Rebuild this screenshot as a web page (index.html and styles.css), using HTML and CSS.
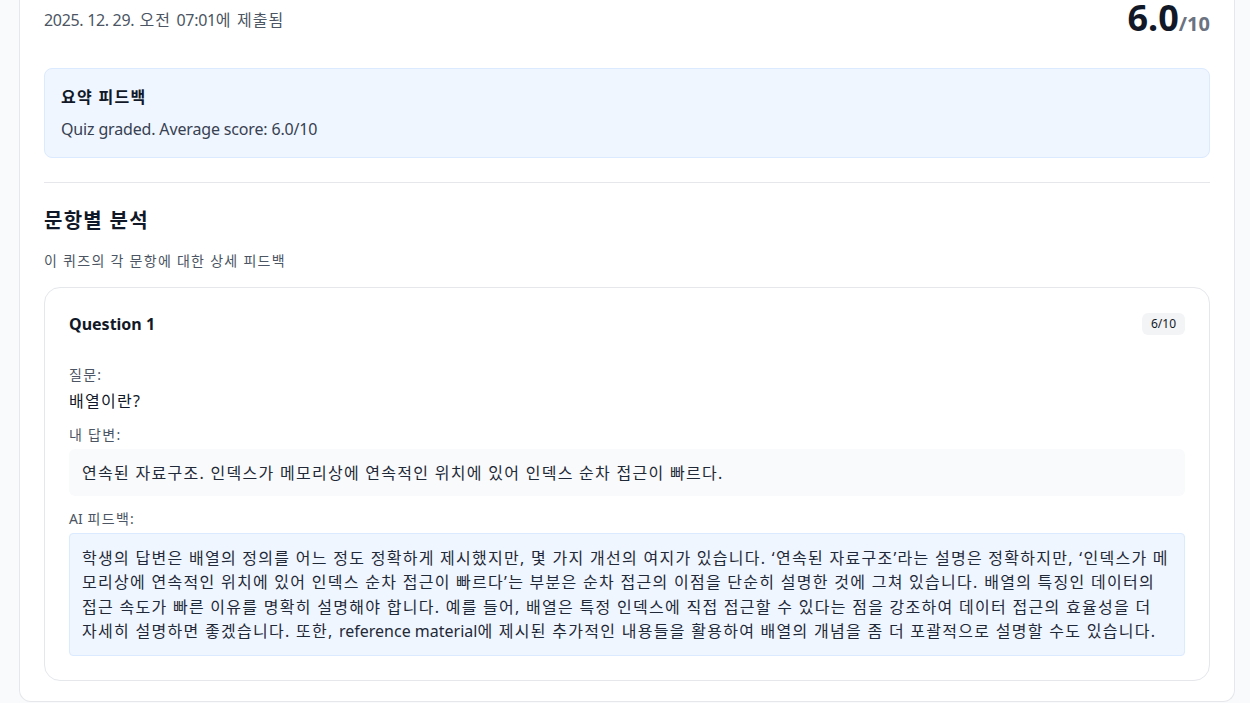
FILE: index.html
```html
<!DOCTYPE html>
<html lang="ko">
<head>
<meta charset="utf-8">
<title>퀴즈 결과</title>
<link rel="stylesheet" href="styles.css">
</head>
<body>
<main class="sheet">
  <header class="submit-row">
    <p class="submitted"><span class="latin">2025. 12. 29.</span> 오전 <span class="latin">07:01</span>에 제출됨</p>
    <div class="score"><span class="score-value">6.0</span><span class="score-max">/10</span></div>
  </header>

  <section class="summary">
    <h3 class="summary-title">요약 피드백</h3>
    <p class="summary-text latin">Quiz graded. Average score: 6.0/10</p>
  </section>

  <hr class="divider">

  <section class="breakdown">
    <h2 class="breakdown-title">문항별 분석</h2>
    <p class="breakdown-sub">이 퀴즈의 각 문항에 대한 상세 피드백</p>

    <article class="question">
      <div class="question-head">
        <h4 class="question-title latin">Question 1</h4>
        <span class="badge latin">6/10</span>
      </div>

      <p class="field-label">질문:</p>
      <p class="question-text">배열이란?</p>

      <p class="field-label">내 답변:</p>
      <div class="answer">연속된 자료구조. 인덱스가 메모리상에 연속적인 위치에 있어 인덱스 순차 접근이 빠르다.</div>

      <p class="field-label"><span class="latin">AI</span> 피드백:</p>
      <div class="feedback">학생의 답변은 배열의 정의를 어느 정도 정확하게 제시했지만, 몇 가지 개선의 여지가 있습니다. ‘연속된 자료구조’라는 설명은 정확하지만, ‘인덱스가 메모리상에 연속적인 위치에 있어 인덱스 순차 접근이 빠르다’는 부분은 순차 접근의 이점을 단순히 설명한 것에 그쳐 있습니다. 배열의 특징인 데이터의 접근 속도가 빠른 이유를 명확히 설명해야 합니다. 예를 들어, 배열은 특정 인덱스에 직접 접근할 수 있다는 점을 강조하여 데이터 접근의 효율성을 더 자세히 설명하면 좋겠습니다. 또한, <span class="latin">reference material</span>에 제시된 추가적인 내용들을 활용하여 배열의 개념을 좀 더 포괄적으로 설명할 수도 있습니다.</div>
    </article>
  </section>
</main>
</body>
</html>
```

FILE: styles.css
```css
* {
  box-sizing: border-box;
}

html, body {
  margin: 0;
  padding: 0;
  height: 100%;
  overflow: hidden;
}

body {
  background: #f9fafb;
  font-family: "Noto Sans", "Noto Sans CJK KR", sans-serif;
  color: #111827;
  /* Hangul runs are set a little looser */
  letter-spacing: 0.08em;
}

.latin {
  letter-spacing: 0;
}

p, h2, h3, h4 {
  margin: 0;
}

.sheet {
  margin: 0 15px 0 19px;
  background: #ffffff;
  border: 1px solid #e5e7eb;
  border-top: none;
  border-radius: 0 0 12px 12px;
  padding: 0 24px 20px;
}

/* submission date and total score */
.submit-row {
  display: flex;
  justify-content: space-between;
  align-items: center;
  height: 40px;
  margin-bottom: 28px;
}

.submitted {
  font-size: 16px;
  line-height: 24px;
  color: #4b5563;
  letter-spacing: 0.07em;
}

.submitted .latin {
  letter-spacing: -0.02em;
}

.score {
  display: flex;
  align-items: baseline;
  line-height: 40px;
  letter-spacing: 0;
  padding-top: 2px;
}

.score-value {
  font-size: 36px;
  font-weight: 700;
  color: #111827;
}

.score-max {
  font-size: 20px;
  font-weight: 700;
  color: #6b7280;
}

/* summary card */
.summary {
  background: #eff6ff;
  border: 1px solid #dbeafe;
  border-radius: 8px;
  padding: 16px;
}

.summary-title {
  font-size: 16px;
  line-height: 24px;
  font-weight: 700;
  margin-bottom: 8px;
}

.summary-text {
  font-size: 16px;
  line-height: 24px;
  color: #374151;
  letter-spacing: -0.01em;
}

.divider {
  border: none;
  border-top: 1px solid #e5e7eb;
  margin: 24px 0;
}

/* per-question breakdown */
.breakdown-title {
  font-size: 20px;
  line-height: 28px;
  font-weight: 700;
  margin-bottom: 16px;
}

.breakdown-sub {
  font-size: 14px;
  line-height: 20px;
  color: #4b5563;
  margin-bottom: 16px;
}

.question {
  border: 1px solid #e5e7eb;
  border-radius: 16px;
  padding: 24px;
}

.question-head {
  display: flex;
  justify-content: space-between;
  align-items: center;
  height: 24px;
  margin-bottom: 29px;
}

.question-title {
  font-size: 16px;
  line-height: 24px;
  font-weight: 700;
}

.badge {
  background: #f3f4f6;
  color: #111827;
  font-size: 12px;
  line-height: 22px;
  padding: 0 9px;
  border-radius: 6px;
}

.field-label {
  font-size: 14px;
  line-height: 20px;
  color: #4b5563;
  margin-bottom: 4px;
}

.question-text {
  font-size: 16px;
  line-height: 24px;
  color: #111827;
  margin-bottom: 12px;
}

.answer {
  background: #f9fafb;
  border-radius: 6px;
  padding: 12px 13px 11px;
  font-size: 16px;
  line-height: 24px;
  color: #1f2937;
  margin-bottom: 13px;
}

.feedback {
  background: #eff6ff;
  border: 1px solid #dbeafe;
  border-radius: 4px;
  padding: 12px;
  font-size: 16px;
  line-height: 24.3px;
  color: #1f2937;
}
```
